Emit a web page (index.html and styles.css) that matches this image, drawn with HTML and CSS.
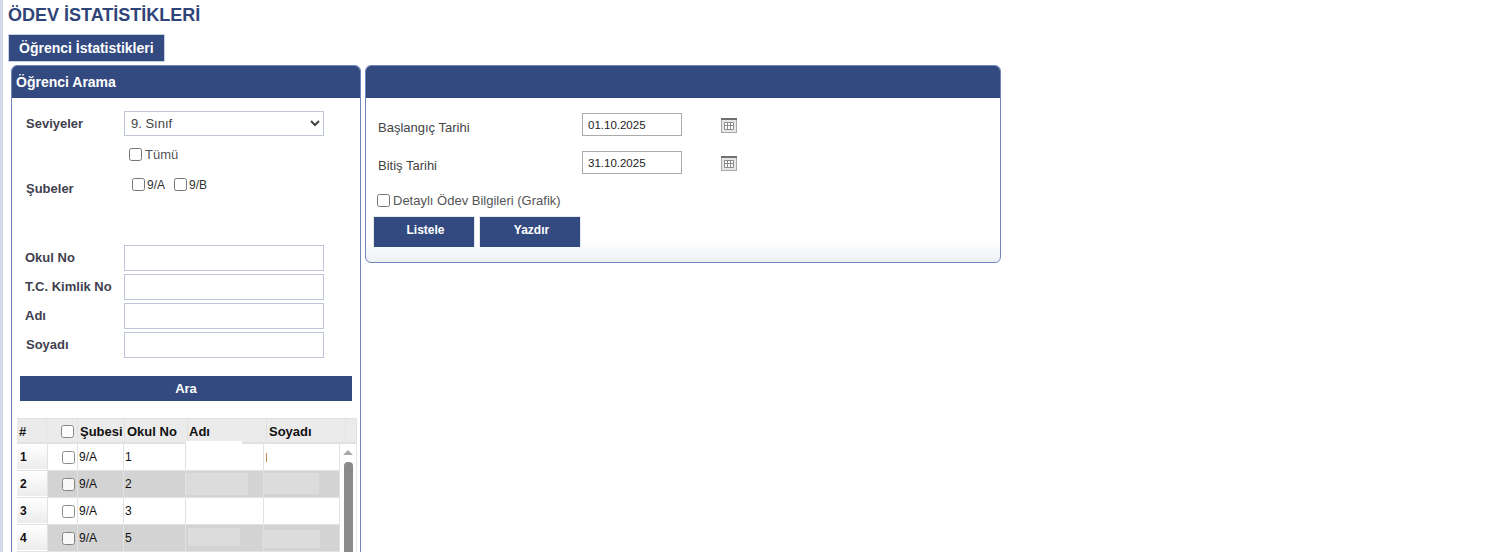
FILE: index.html
```html
<!DOCTYPE html>
<html lang="tr">

<head>
    <meta charset="UTF-8">
    <meta name="viewport" content="width=device-width, initial-scale=1.0">
    <title>Ödev İstatistikleri</title>
    <link rel="stylesheet" href="styles.css">
</head>

<body>
    <div class="page">
        <h1 class="page-title">ÖDEV İSTATİSTİKLERİ</h1>

        <div class="tabs">
            <a class="tab" href="#">Öğrenci İstatistikleri</a>
        </div>

        <div class="panels">
            <!-- Left: student search -->
            <section class="panel panel-search">
                <h2 class="panel-head">Öğrenci Arama</h2>

                <div class="level-row">
                    <label class="field-label" for="level">Seviyeler</label>
                    <select id="level" class="level-select">
                        <option>9. Sınıf</option>
                    </select>
                </div>

                <label class="check check-all"><input type="checkbox"> Tümü</label>

                <div class="branch-row">
                    <span class="field-label">Şubeler</span>
                    <div class="branch-list">
                        <label class="check check-small"><input type="checkbox"> 9/A</label>
                        <label class="check check-small"><input type="checkbox"> 9/B</label>
                    </div>
                </div>

                <div class="search-fields">
                    <label class="field-label" for="no">Okul No</label>
                    <input id="no" class="text-input" type="text">
                    <label class="field-label" for="tc">T.C. Kimlik No</label>
                    <input id="tc" class="text-input" type="text">
                    <label class="field-label" for="ad">Adı</label>
                    <input id="ad" class="text-input" type="text">
                    <label class="field-label label-shift" for="soyad">Soyadı</label>
                    <input id="soyad" class="text-input" type="text">
                </div>

                <button class="btn btn-wide" type="button">Ara</button>

                <div class="grid">
                    <div class="grid-row grid-header">
                        <div class="cell">#</div>
                        <div class="cell cell-check"><input type="checkbox"></div>
                        <div class="cell">Şubesi</div>
                        <div class="cell">Okul No</div>
                        <div class="cell cell-name">Adı</div>
                        <div class="cell cell-surname">Soyadı</div>
                        <div class="cell"></div>
                    </div>

                    <div class="grid-scroll">
                        <div class="grid-body">
                            <div class="grid-row">
                                <div class="cell cell-num">1</div>
                                <div class="cell cell-check"><input type="checkbox"></div>
                                <div class="cell">9/A</div>
                                <div class="cell">1</div>
                                <div class="cell"><span class="head-patch"></span></div>
                                <div class="cell"><span class="text-mark"></span></div>
                            </div>
                            <div class="grid-row row-alt">
                                <div class="cell cell-num">2</div>
                                <div class="cell cell-check"><input type="checkbox"></div>
                                <div class="cell">9/A</div>
                                <div class="cell">2</div>
                                <div class="cell"><span class="patch patch-a"></span></div>
                                <div class="cell"><span class="patch patch-b"></span></div>
                            </div>
                            <div class="grid-row">
                                <div class="cell cell-num">3</div>
                                <div class="cell cell-check"><input type="checkbox"></div>
                                <div class="cell">9/A</div>
                                <div class="cell">3</div>
                                <div class="cell"></div>
                                <div class="cell"></div>
                            </div>
                            <div class="grid-row row-alt">
                                <div class="cell cell-num">4</div>
                                <div class="cell cell-check"><input type="checkbox"></div>
                                <div class="cell">9/A</div>
                                <div class="cell">5</div>
                                <div class="cell"><span class="patch patch-c"></span></div>
                                <div class="cell"><span class="patch patch-d"></span></div>
                            </div>
                        </div>
                        <div class="scrollbar">
                            <span class="scroll-arrow"></span>
                            <span class="scroll-thumb"></span>
                        </div>
                    </div>
                </div>
            </section>

            <!-- Right: date range -->
            <section class="panel panel-dates">
                <h2 class="panel-head"></h2>

                <div class="date-row">
                    <label class="date-label" for="start">Başlangıç Tarihi</label>
                    <input id="start" class="date-input" type="text" value="01.10.2025">
                    <svg class="cal-icon" width="16" height="15" viewBox="0 0 16 15">
                        <rect x="0" y="0" width="16" height="15" fill="#a8a8a8"/>
                        <rect x="0" y="0" width="16" height="2" fill="#707070"/>
                        <rect x="1" y="2" width="14" height="12" fill="#e6e6e6"/>
                        <path d="M3.5 4.5h9v7h-9z" fill="#fff" stroke="#8c8c8c"/>
                        <path d="M6.5 4v8M9.5 4v8M3 7.5h10" stroke="#8c8c8c" fill="none"/>
                    </svg>
                </div>

                <div class="date-row">
                    <label class="date-label" for="end">Bitiş Tarihi</label>
                    <input id="end" class="date-input" type="text" value="31.10.2025">
                    <svg class="cal-icon" width="16" height="15" viewBox="0 0 16 15">
                        <rect x="0" y="0" width="16" height="15" fill="#a8a8a8"/>
                        <rect x="0" y="0" width="16" height="2" fill="#707070"/>
                        <rect x="1" y="2" width="14" height="12" fill="#e6e6e6"/>
                        <path d="M3.5 4.5h9v7h-9z" fill="#fff" stroke="#8c8c8c"/>
                        <path d="M6.5 4v8M9.5 4v8M3 7.5h10" stroke="#8c8c8c" fill="none"/>
                    </svg>
                </div>

                <label class="check check-detail"><input type="checkbox"> Detaylı Ödev Bilgileri (Grafik)</label>

                <div class="actions">
                    <button class="btn btn-action" type="button">Listele</button>
                    <button class="btn btn-action" type="button">Yazdır</button>
                </div>
            </section>
        </div>
    </div>
</body>

</html>
```

FILE: styles.css
```css
* {
    box-sizing: border-box;
}

html,
body {
    height: 100%;
}

body {
    margin: 0;
    overflow: hidden;
    font-family: "Liberation Sans", Arial, sans-serif;
    font-size: 13px;
    color: #444;
    background-color: #fff;
}

.page {
    height: 552px;
    overflow: hidden;
    padding-left: 5px;
    border-left: 3px solid #d0daea;
}

.page-title {
    margin: 0;
    padding-top: 5px;
    font-size: 18px;
    line-height: 21px;
    font-weight: bold;
    color: #2f4478;
}

.tabs {
    display: flex;
    margin-top: 8px;
}

.tab {
    height: 28px;
    padding: 0 10px;
    border: 1px solid #c9d1e4;
    background-color: #334a80;
    color: #fff;
    font-size: 14px;
    font-weight: bold;
    line-height: 26px;
    text-decoration: none;
}

.panels {
    display: flex;
    align-items: flex-start;
    gap: 4px;
    margin-top: 3px;
    margin-left: 3px;
}

.panel {
    border: 1px solid #6f84c0;
    border-radius: 6px;
    background-color: #fff;
}

.panel-head {
    height: 32px;
    margin: 0;
    padding-left: 4px;
    border-radius: 5px 5px 0 0;
    background-color: #334a80;
    color: #fff;
    font-size: 14px;
    font-weight: bold;
    line-height: 33px;
}

.panel-search {
    width: 350px;
    height: 560px;
    flex-shrink: 0;
}

.panel-dates {
    width: 636px;
    height: 198px;
    background: linear-gradient(to bottom, #fff 174px, #eef0f4 100%);
}

/* search form */
.field-label {
    color: #3f3f50;
    font-size: 13px;
    font-weight: bold;
}

.level-row {
    display: grid;
    grid-template-columns: 98px 200px;
    align-items: center;
    margin-top: 13px;
    padding-left: 14px;
}

.level-select {
    height: 25px;
    padding-left: 2px;
    border: 1px solid #bfc6dc;
    background-color: #fff;
    color: #444;
    font-family: inherit;
    font-size: 13px;
}

.check {
    display: flex;
    align-items: center;
    gap: 3px;
    color: #555;
    font-size: 13px;
}

.check input {
    width: 13px;
    height: 13px;
    margin: 0;
}

.check-all {
    margin-top: 11px;
    margin-left: 117px;
}

.branch-row {
    display: grid;
    grid-template-columns: 106px 1fr;
    margin-top: 9px;
    padding-left: 14px;
    height: 71px;
}

.branch-row .field-label {
    margin-top: 10px;
}

.branch-list {
    display: flex;
    gap: 9px;
    height: 24px;
    padding-top: 7px;
}

.check-small {
    gap: 2px;
    height: 13px;
    color: #333;
    font-size: 12px;
}

.search-fields {
    display: grid;
    grid-template-columns: 99px 200px;
    grid-auto-rows: 26px;
    align-items: center;
    row-gap: 3px;
    margin-top: 3px;
    padding-left: 13px;
}

.search-fields .field-label {
    padding-bottom: 2px;
}

.search-fields .label-shift {
    padding-left: 1px;
}

.text-input {
    width: 200px;
    height: 26px;
    border: 1px solid #bfc6dc;
    background-color: #fff;
}

.btn {
    border: none;
    background-color: #334a80;
    color: #fff;
    font-family: inherit;
    font-size: 12px;
    font-weight: bold;
}

.btn-wide {
    display: block;
    width: 332px;
    height: 25px;
    margin: 18px 0 0 8px;
    padding-top: 1px;
    font-size: 13px;
}

/* student grid */
.grid {
    width: 340px;
    margin: 17px 0 0 5px;
    border: 1px solid #e8e8e8;
    border-width: 0 1px 0 0;
    color: #111;
    font-size: 12px;
}

.grid-row {
    display: grid;
    grid-template-columns: 31px 30px 46px 62px 78px 76px;
    height: 27px;
    border-bottom: 1px solid #e2e2e2;
    background-color: #fff;
}

.grid-header {
    grid-template-columns: 30px 31px 47px 63px 79px 79px 11px;
    height: 26px;
    border-top: 1px solid #e2e2e2;
    border-bottom: 2px solid #e2e2e2;
    background-color: #ebebeb;
    font-size: 13px;
    font-weight: bold;
}

.cell {
    display: flex;
    position: relative;
    align-items: center;
    padding-left: 1px;
    border-right: 1px solid #e2e2e2;
    overflow: visible;
}

.grid-header .cell {
    padding-top: 1px;
    padding-left: 2px;
}

.grid-header .cell-name {
    padding-left: 1px;
}

.cell-check {
    justify-content: center;
}

.cell-check input {
    width: 13px;
    height: 13px;
    margin: 0;
    opacity: 0.85;
}

.grid-header .cell-check {
    padding-left: 10px;
}

.grid-row .cell-check {
    padding-left: 11px;
}

.cell-num {
    padding-left: 3px;
    border-bottom: 1px solid #fff;
    background: linear-gradient(to bottom, #fff, #ececec);
    font-weight: bold;
}

.row-alt {
    background-color: #d3d3d3;
}

.grid-scroll {
    display: flex;
}

.grid-body {
    width: 323px;
}

.scrollbar {
    display: flex;
    flex-direction: column;
    align-items: center;
    width: 16px;
    padding-top: 6px;
}

.scroll-arrow {
    width: 0;
    height: 0;
    border-left: 5px solid transparent;
    border-right: 5px solid transparent;
    border-bottom: 5px solid #a9a9a9;
}

.scroll-thumb {
    width: 9px;
    height: 120px;
    margin-top: 7px;
    border-radius: 4px 4px 0 0;
    background-color: #8a8a8a;
}

/* blanked-out names sit over their cell */
.patch {
    position: absolute;
    background-color: #dcdcdc;
}

.patch-a {
    left: 0;
    top: 2px;
    width: 62px;
    height: 22px;
}

.patch-b {
    left: 0;
    top: 2px;
    width: 55px;
    height: 21px;
}

.patch-c {
    left: 2px;
    top: 3px;
    width: 52px;
    height: 18px;
}

.patch-d {
    left: -2px;
    top: 5px;
    width: 58px;
    height: 18px;
}

.head-patch {
    position: absolute;
    left: 0;
    top: -3px;
    width: 56px;
    height: 3px;
    background-color: #fff;
}

.text-mark {
    width: 1px;
    height: 9px;
    margin-left: 1px;
    background-color: #c98b4b;
}

/* date panel */
.date-row {
    display: flex;
    align-items: center;
    margin-top: 15px;
    padding-left: 12px;
}

.date-label {
    width: 204px;
    padding-top: 5px;
    color: #444;
    font-size: 13px;
}

.date-input {
    width: 100px;
    height: 23px;
    padding: 0 5px;
    border: 1px solid #aaa;
    color: #222;
    font-family: inherit;
    font-size: 11.5px;
}

.cal-icon {
    margin-left: 39px;
    margin-top: 1px;
}

.check-detail {
    margin-top: 19px;
    margin-left: 11px;
}

.actions {
    display: flex;
    gap: 4px;
    margin-top: 8px;
    margin-left: 7px;
}

.btn-action {
    width: 102px;
    height: 31px;
    padding: 0 0 5px 3px;
    border: 1px solid #e6e8ee;
    border-bottom: none;
}
```
